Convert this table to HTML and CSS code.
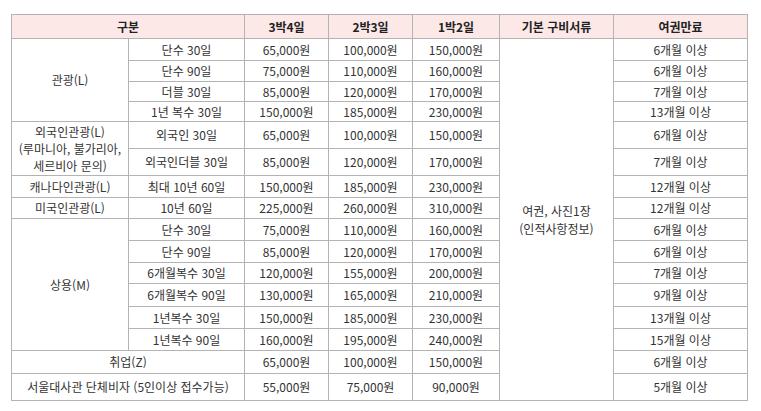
FILE: index.html
```html
<!DOCTYPE html>
<html lang="ko">
<head>
<meta charset="utf-8">
<title>비자 요금표</title>
<link rel="stylesheet" href="styles.css">
</head>
<body>
<table class="fee">
  <colgroup>
    <col class="c1"><col class="c2"><col class="c3"><col class="c4"><col class="c5"><col class="c6"><col class="c7">
  </colgroup>
  <thead>
    <tr class="h24">
      <th colspan="2">구분</th>
      <th>3박4일</th>
      <th>2박3일</th>
      <th>1박2일</th>
      <th>기본 구비서류</th>
      <th>여권만료</th>
    </tr>
  </thead>
  <tbody>
    <tr class="h22">
      <td rowspan="4">관광(L)</td>
      <td>단수 30일</td><td>65,000원</td><td>100,000원</td><td>150,000원</td>
      <td rowspan="16" class="docs">여권, 사진1장<br>(인적사항정보)</td>
      <td>6개월 이상</td>
    </tr>
    <tr class="h21"><td>단수 90일</td><td>75,000원</td><td>110,000원</td><td>160,000원</td><td>6개월 이상</td></tr>
    <tr class="h20"><td>더블 30일</td><td>85,000원</td><td>120,000원</td><td>170,000원</td><td>7개월 이상</td></tr>
    <tr class="h20"><td>1년 복수 30일</td><td>150,000원</td><td>185,000원</td><td>230,000원</td><td>13개월 이상</td></tr>
    <tr class="h27">
      <td rowspan="2" class="multi">외국인관광(L)<br>(루마니아, 불가리아,<br>세르비아 문의)</td>
      <td>외국인 30일</td><td>65,000원</td><td>100,000원</td><td>150,000원</td><td>6개월 이상</td>
    </tr>
    <tr class="h27"><td>외국인더블 30일</td><td>85,000원</td><td>120,000원</td><td>170,000원</td><td>7개월 이상</td></tr>
    <tr class="h22"><td>캐나다인관광(L)</td><td>최대 10년 60일</td><td>150,000원</td><td>185,000원</td><td>230,000원</td><td>12개월 이상</td></tr>
    <tr class="h21"><td>미국인관광(L)</td><td>10년 60일</td><td>225,000원</td><td>260,000원</td><td>310,000원</td><td>12개월 이상</td></tr>
    <tr class="h22">
      <td rowspan="6">상용(M)</td>
      <td>단수 30일</td><td>75,000원</td><td>110,000원</td><td>160,000원</td><td>6개월 이상</td>
    </tr>
    <tr class="h22"><td>단수 90일</td><td>85,000원</td><td>120,000원</td><td>170,000원</td><td>6개월 이상</td></tr>
    <tr class="h21"><td>6개월복수 30일</td><td>120,000원</td><td>155,000원</td><td>200,000원</td><td>7개월 이상</td></tr>
    <tr class="h23"><td>6개월복수 90일</td><td>130,000원</td><td>165,000원</td><td>210,000원</td><td>9개월 이상</td></tr>
    <tr class="h22"><td>1년복수 30일</td><td>150,000원</td><td>185,000원</td><td>230,000원</td><td>13개월 이상</td></tr>
    <tr class="h22"><td>1년복수 90일</td><td>160,000원</td><td>195,000원</td><td>240,000원</td><td>15개월 이상</td></tr>
    <tr class="h23"><td colspan="2">취업(Z)</td><td>65,000원</td><td>100,000원</td><td>150,000원</td><td>6개월 이상</td></tr>
    <tr class="h27"><td colspan="2">서울대사관 단체비자 (5인이상 접수가능)</td><td>55,000원</td><td>75,000원</td><td>90,000원</td><td>5개월 이상</td></tr>
  </tbody>
</table>
</body>
</html>
```

FILE: styles.css
```css
html, body {
  margin: 0;
  padding: 0;
  background: #ffffff;
}

body {
  font-family: "Noto Sans CJK KR", "Noto Sans", sans-serif;
  font-size: 12px;
  color: #333333;
}

.fee {
  margin: 14px 0 0 11px;
  border-collapse: collapse;
  table-layout: fixed;
  width: 736px;
}

.c1 { width: 117px; }
.c2 { width: 116px; }
.c3 { width: 84px; }
.c4 { width: 84px; }
.c5 { width: 87px; }
.c6 { width: 114px; }
.c7 { width: 134px; }

.fee th,
.fee td {
  border: 1px solid #b3b3b3;
  padding: 0;
  text-align: center;
  vertical-align: middle;
  line-height: 16px;
  white-space: nowrap;
}

.fee th {
  background: #fde8e8;
  color: #222222;
  font-weight: bold;
}

.fee .multi {
  line-height: 17px;
}

.fee .docs {
  line-height: 18px;
}

.h20 { height: 20px; }
.h21 { height: 21px; }
.h22 { height: 22px; }
.h23 { height: 23px; }
.h24 { height: 24px; }
.h27 { height: 27px; }
```
